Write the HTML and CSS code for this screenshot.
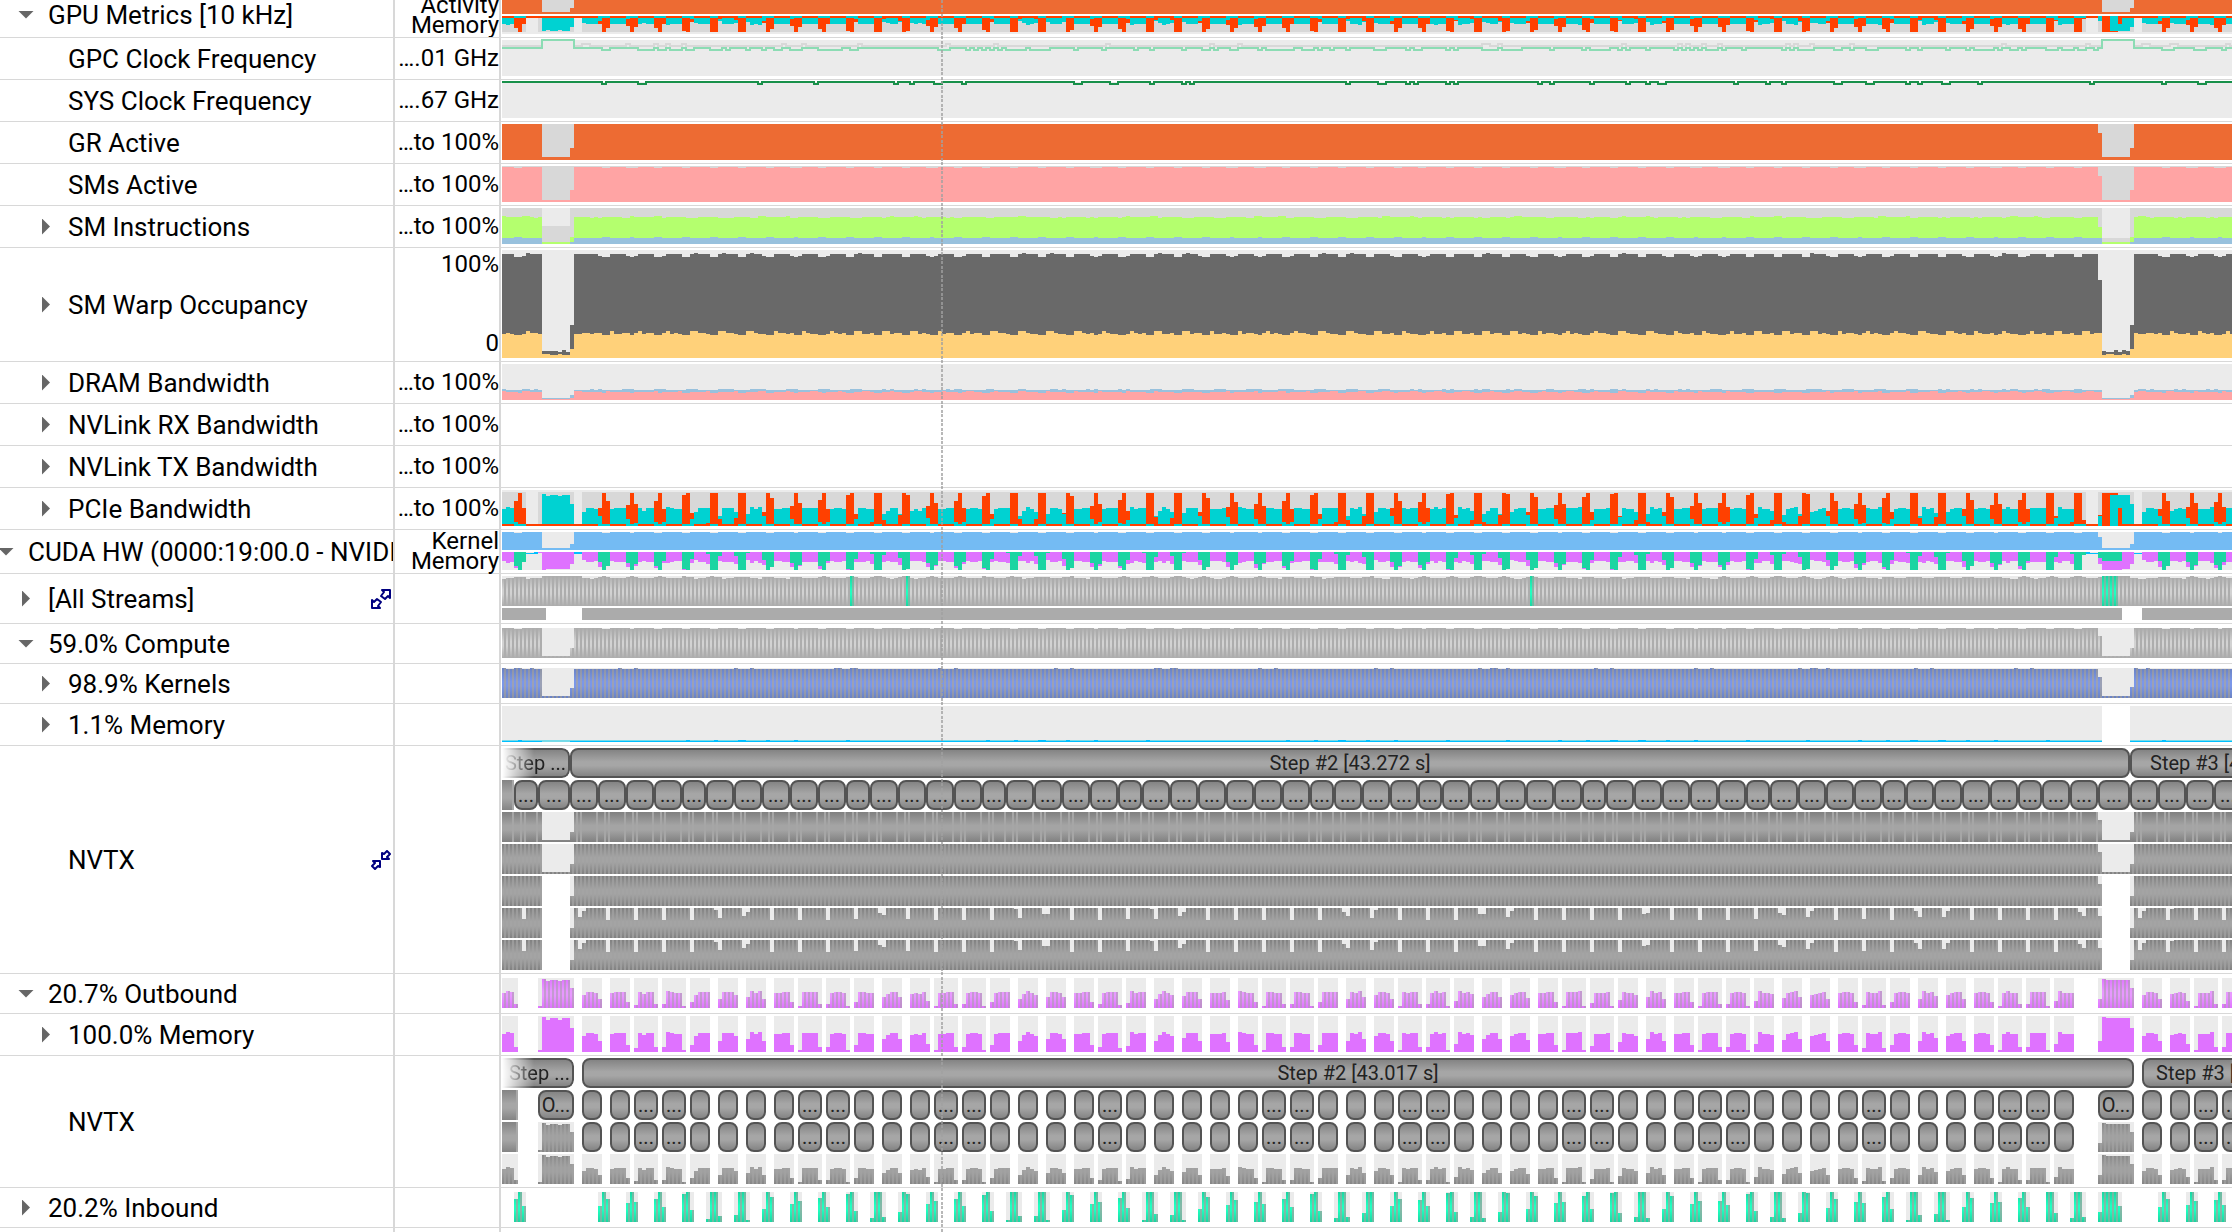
FILE: index.html
```html
<!DOCTYPE html>
<html lang="en">
<head>
<meta charset="utf-8">
<title>GPU timeline</title>
<link rel="stylesheet" href="styles.css">
</head>
<body>
<main class="timeline">
  <section class="row row-first">
    <div class="name lvl1"><button class="exp open" aria-label="Collapse GPU Metrics"></button><span>GPU Metrics [10 kHz]</span></div>
    <div class="scale"><span>Activity</span><span>Memory</span></div>
    <div class="lanes"><div class="lane h14" data-lane="activity"></div><div class="lane h18" data-lane="gpumem"></div></div>
  </section>
  <section class="row"><div class="name leaf"><span>GPC Clock Frequency</span></div><div class="scale"><span>….01 GHz</span></div><div class="lanes"><div class="lane h36" data-lane="gpc"></div></div></section>
  <section class="row"><div class="name leaf"><span>SYS Clock Frequency</span></div><div class="scale"><span>….67 GHz</span></div><div class="lanes"><div class="lane h36" data-lane="sys"></div></div></section>
  <section class="row"><div class="name leaf"><span>GR Active</span></div><div class="scale"><span>…to 100%</span></div><div class="lanes"><div class="lane h36" data-lane="gr"></div></div></section>
  <section class="row"><div class="name leaf"><span>SMs Active</span></div><div class="scale"><span>…to 100%</span></div><div class="lanes"><div class="lane h36" data-lane="sms"></div></div></section>
  <section class="row"><div class="name lvl2"><button class="exp" aria-label="Expand SM Instructions"></button><span>SM Instructions</span></div><div class="scale"><span>…to 100%</span></div><div class="lanes"><div class="lane h36" data-lane="instr"></div></div></section>
  <section class="row"><div class="name lvl2"><button class="exp" aria-label="Expand SM Warp Occupancy"></button><span>SM Warp Occupancy</span></div><div class="scale spread"><span>100%</span><span>0</span></div><div class="lanes"><div class="lane h108" data-lane="warp"></div></div></section>
  <section class="row"><div class="name lvl2"><button class="exp" aria-label="Expand DRAM Bandwidth"></button><span>DRAM Bandwidth</span></div><div class="scale"><span>…to 100%</span></div><div class="lanes"><div class="lane h36" data-lane="dram"></div></div></section>
  <section class="row"><div class="name lvl2"><button class="exp" aria-label="Expand NVLink RX Bandwidth"></button><span>NVLink RX Bandwidth</span></div><div class="scale"><span>…to 100%</span></div><div class="lanes"><div class="lane h36"></div></div></section>
  <section class="row"><div class="name lvl2"><button class="exp" aria-label="Expand NVLink TX Bandwidth"></button><span>NVLink TX Bandwidth</span></div><div class="scale"><span>…to 100%</span></div><div class="lanes"><div class="lane h36"></div></div></section>
  <section class="row"><div class="name lvl2"><button class="exp" aria-label="Expand PCIe Bandwidth"></button><span>PCIe Bandwidth</span></div><div class="scale"><span>…to 100%</span></div><div class="lanes"><div class="lane h36" data-lane="pcie"></div></div></section>
  <section class="row"><div class="name lvl0"><button class="exp open" aria-label="Collapse CUDA HW"></button><span>CUDA HW (0000:19:00.0 - NVIDIA)</span></div><div class="scale"><span>Kernel</span><span>Memory</span></div><div class="lanes"><div class="lane h18" data-lane="kernel"></div><div class="lane h18" data-lane="cudamem"></div></div></section>
  <section class="row"><div class="name lvl1"><button class="exp" aria-label="Expand all streams"></button><span>[All Streams]</span>
    <button class="link" aria-label="Expand rows"><svg width="20" height="20" viewBox="0 0 20 20"><path d="M11 1H19V9L17 7L14 10L10 7L13 3Z"/><path d="M9 19H1V11L3 13L6 10L10 13L7 17Z"/></svg></button></div>
    <div class="scale"></div><div class="lanes"><div class="lane h30" data-lane="streams"></div><div class="lane h12" data-lane="range"></div></div></section>
  <section class="row roomy"><div class="name lvl1"><button class="exp open" aria-label="Collapse Compute"></button><span>59.0% Compute</span></div><div class="scale"></div><div class="lanes"><div class="lane h30" data-lane="compute"></div></div></section>
  <section class="row roomy"><div class="name lvl2"><button class="exp" aria-label="Expand Kernels"></button><span>98.9% Kernels</span></div><div class="scale"></div><div class="lanes"><div class="lane h30" data-lane="kernels"></div></div></section>
  <section class="row"><div class="name lvl2"><button class="exp" aria-label="Expand Memory"></button><span>1.1% Memory</span></div><div class="scale"></div><div class="lanes"><div class="lane h36" data-lane="memory"></div></div></section>
  <section class="row"><div class="name leaf"><span>NVTX</span>
    <button class="link" aria-label="Collapse rows"><svg width="20" height="20" viewBox="0 0 20 20"><path d="M11 3V9H18L16 7L19 4L16 1L13 4Z"/><path d="M9 17V11H2L4 13L1 16L4 19L7 16Z"/></svg></button></div>
    <div class="scale"></div>
    <div class="lanes"><div class="lane h30" data-lane="steps1"></div><div class="lane h30" data-lane="layers"></div><div class="lane h30" data-lane="nv3"></div><div class="lane h30" data-lane="nv4"></div><div class="lane h30" data-lane="nv5"></div><div class="lane h30" data-lane="nv6"></div><div class="lane h30" data-lane="nv7"></div></div></section>
  <section class="row roomy"><div class="name lvl1"><button class="exp open" aria-label="Collapse Outbound"></button><span>20.7% Outbound</span></div><div class="scale"></div><div class="lanes"><div class="lane h30" data-lane="outbound"></div></div></section>
  <section class="row"><div class="name lvl2"><button class="exp" aria-label="Expand Outbound Memory"></button><span>100.0% Memory</span></div><div class="scale"></div><div class="lanes"><div class="lane h36" data-lane="outmem"></div></div></section>
  <section class="row"><div class="name leaf"><span>NVTX</span></div><div class="scale"></div>
    <div class="lanes"><div class="lane h30" data-lane="steps2"></div><div class="lane h30" data-lane="ops1"></div><div class="lane h30" data-lane="ops2"></div><div class="lane h30" data-lane="ops3"></div></div></section>
  <section class="row roomy"><div class="name lvl1"><button class="exp" aria-label="Expand Inbound"></button><span>20.2% Inbound</span></div><div class="scale"></div><div class="lanes"><div class="lane h30" data-lane="inbound"></div></div></section>
  <section class="row rest"><div class="name"></div><div class="scale"></div><div class="lanes"></div></section>
  <svg class="cursor" width="2"><line x1="1" y1="0" x2="1" y2="4000"/></svg>
</main>
<script src="timeline.js"></script>
</body>
</html>
```
FILE: styles.css
```css
* { box-sizing: border-box; }
body {
  margin: 0;
  background: #fff;
  color: #000;
  font-family: Roboto, "Liberation Sans", sans-serif;
  font-size: 26px;
  overflow: hidden;
}
button { border: 0; padding: 0; background: none; font: inherit; }
.timeline {
  position: relative;
  display: flex;
  flex-direction: column;
  min-height: 100vh;
  overflow: hidden;
}
.row {
  display: grid;
  grid-template-columns: 395px 106px minmax(0, 1fr);
  border-bottom: 1px solid #d8d8d8;
}
.name, .scale { border-right: 2px solid #d8d8d8; }
.name {
  display: flex;
  align-items: center;
  min-width: 0;
  overflow: hidden;
  white-space: nowrap;
  line-height: 30px;
}
.name span { flex: 1; min-width: 0; overflow: hidden; }
.lvl0 .exp { margin-left: -4px; }
.lvl1 { padding-left: 16px; }
.lvl2 { padding-left: 36px; }
.leaf { padding-left: 68px; }
.exp {
  flex: none;
  width: 20px;
  height: 20px;
  margin-right: 12px;
  display: grid;
  place-items: center;
}
.exp::before {
  content: "";
  width: 8px;
  height: 16px;
  background: #666;
  clip-path: polygon(0 0, 100% 50%, 0 100%);
}
.exp.open::before {
  width: 16px;
  height: 8px;
  clip-path: polygon(0 0, 100% 0, 50% 100%);
}
.link { flex: none; width: 20px; height: 20px; margin-right: 2px; display: grid; }
.link path { fill: #fff; stroke: #000080; stroke-width: 2; stroke-linejoin: round; }
.scale {
  display: flex;
  flex-direction: column;
  justify-content: center;
  align-items: flex-end;
  min-height: 0;
  padding-bottom: 1px;
  font-size: 24px;
  line-height: 20px;
  white-space: nowrap;
}
.spread { justify-content: space-between; padding: 6px 0 8px; }
.row-first { height: 38px; overflow: hidden; }
.row-first .name { padding-bottom: 8px; }
.row-first .scale { justify-content: flex-end; padding-bottom: 2px; }
.lanes {
  display: flex;
  flex-direction: column;
  gap: 2px;
  min-width: 0;
  padding: 2px 0 3px 1px;
}
.row-first .lanes { padding-top: 0; }
.roomy .lanes { padding-top: 4px; padding-bottom: 5px; }
.rest { flex: 1; border-bottom: 0; }
.rest .lanes { padding: 0; }
.lane { position: relative; overflow-x: clip; overflow-y: visible; }
.lane svg { display: block; overflow: visible; }
.h12 { height: 12px; }
.h14 { height: 14px; }
.h18 { height: 18px; }
.h30 { height: 30px; }
.h36 { height: 36px; }
.h108 { height: 108px; }
.pill {
  position: absolute;
  top: 0;
  height: 30px;
  border: 2px solid #545454;
  border-radius: 8px;
  background: linear-gradient(#848484, #a6a6a6 45%, #a6a6a6 60%, #848484);
  color: #222;
  font-size: 20px;
  line-height: 26px;
  text-align: center;
  white-space: nowrap;
  overflow: hidden;
}
.pill.start {
  border-left: 0;
  border-radius: 0 8px 8px 0;
  padding-right: 2px;
  text-align: right;
  -webkit-mask-image: linear-gradient(to right, transparent, #000 32px);
  mask-image: linear-gradient(to right, transparent, #000 32px);
}
.pill.tail { padding-left: 18px; text-align: left; }
.pill.tail2 { padding-left: 12px; text-align: left; }
.pill.cut { border: 0; border-right: 2px solid #a8a8a8; border-radius: 0; }
.cursor {
  position: absolute;
  left: 941px;
  top: 0;
  height: 100%;
}
.cursor line {
  stroke: #a0a0a0;
  stroke-opacity: .75;
  stroke-width: 2;
  stroke-dasharray: 3 2 3 1;
}
```
FILE: timeline.js
```js
// Every lane is drawn in bins of 4px.
const BIN = 4, N = 434, W = N * BIN;

// Transfers: first bin of each burst, then one base-36 height (of 30) per bin.
const OUT = "0:fhg4 9:2trssrssk 20:dggf9 27:fggg6 33:3gegg4 40:4hgff2 47:6dggg 54:9gggd 61:bhfh9 68:ffgg6 74:2gggg4 81:4fggf2 88:6ggff 95:beggb 102:efeg7 108:2ffgg4 115:4fggf2 122:6fggg 129:9ehfd 136:bggfb 143:ffgg6 149:4fggg3 156:5hfgg 163:9ehfd 170:cggg9 177:fffg8 184:hgff6 190:2ggff4 197:4ggff2 204:6gggg 211:9gfhb 218:dggf9 224:2gfgg4 231:4fhfg2 238:7hfge 245:beggb 252:dfgga 259:ffgg6 265:2gggh2 272:5fffg2 279:8gffd 286:bhfg9 293:ffgg6 299:2fggg4 306:4fggf2 313:7hffe 320:afghb 327:defg9 334:fggf6 340:3gffh3 347:6fggf 354:9hfgc 361:dfgg9 368:fggf6 374:2fhff4 381:4gggg2 388:7hfff 399:9tssssssk 410:dggf9 417:efgf7 423:2fffh4 430:4gggg";
const IN = "3:nug 24:gun 31:juk 38:nuf 45:suc 51:3uu6 58:7uu2 65:dup 72:iul 79:ouf 86:sub 92:4uu5 99:aus 106:iul 113:nug 120:rub 126:2uu6 133:6uu2 140:cur 147:iuk 154:oue 160:2uu8 167:7uu2 174:dup 181:hum 188:kui 195:nuf 202:sub 208:4uu5 215:9uu 222:gun 229:mug 236:tua 242:5uu4 249:aut 256:duq 263:juk 270:qud 277:tu9 283:5uu4 290:duq 297:iul 304:luh 311:sub 317:5uu4 324:9ut 331:eun 338:kuj 345:pud 351:2uu7 358:8uu2 365:fuo 372:juk 379:ouf 386:uu9 392:4uu5 399:auuuug 414:fun 421:hul 428:muh";
function parse(text) {
  const values = new Array(N).fill(0), groups = [];
  text.split(" ").forEach(part => {
    const [at, hs] = part.split(":");
    groups.push([+at, hs.length]);
    [...hs].forEach((c, k) => { if (+at + k < N) values[+at + k] = parseInt(c, 36); });
  });
  return { values, groups };
}
const out = parse(OUT), inn = parse(IN);
const O = out.values, I = inn.values;
const LAYERS = [3,9,17,24,31,38,45,51,58,65,72,79,86,92,99,106,113,120,126,133,140,147,154,160,167,174,181,188,195,202,208,215,222,229,235,242,249,256,263,270,276,283,290,297,304,311,317,324,331,338,345,351,358,365,372,379,385,392,399,407,414,421,428,435];

const idle = i => (i >= 10 && i <= 16) || (i >= 400 && i <= 406);
const noise = (i, m) => ((i * 7919 + (i >> 2) * 104729) % 101) % m;
// level for busy bins, with the two idle windows and their edges
const busy = (h, low) => i => idle(i) ? low : i === 17 || i === 407 ? h / 3 : i === 399 ? h * .74 : h;

let defs = 0;
function lane(name, h, draw) {
  const el = document.querySelector(`[data-lane="${name}"]`);
  let body = "";
  const api = {
    rect(x, y, w, hh, fill) { body += `<rect x="${x}" y="${y}" width="${w}" height="${hh}" fill="${fill}"/>`; },
    // bars(height, fill, base): base(i) gives the bottom edge
    bars(fn, fill, base) {
      let d = "";
      for (let i = 0; i < N; i++) {
        const v = Math.round(fn(i));
        if (v > 0) d += `M${i * BIN} ${(base ? base(i) : h) - v}h4v${v}h-4z`;
      }
      body += `<path d="${d}" fill="${fill}"/>`;
    },
    stripes(edgeA, midA, edgeB, midB) {
      const id = "p" + (++defs);
      const g = (n, a, b) => `<linearGradient id="${id}${n}" x1="0" x2="0" y1="0" y2="1"><stop offset="0" stop-color="${a}"/><stop offset=".45" stop-color="${b}"/><stop offset=".6" stop-color="${b}"/><stop offset="1" stop-color="${a}"/></linearGradient>`;
      body += `<defs>${g("a", edgeA, midA)}${g("b", edgeB, midB)}<pattern id="${id}" width="4" height="${h}" patternUnits="userSpaceOnUse"><rect width="2" height="${h}" fill="url(#${id}a)"/><rect x="2" width="2" height="${h}" fill="url(#${id}b)"/></pattern></defs>`;
      return `url(#${id})`;
    },
    path(d, stroke) { body += `<path d="${d}" fill="none" stroke="${stroke}" stroke-width="2"/>`; }
  };
  draw(api);
  el.innerHTML = `<svg width="${W}" height="${h}" shape-rendering="crispEdges" aria-hidden="true">${body}</svg>`;
}
const LIGHT = "#ebebeb", MID = "#d8d8d8";

lane("activity", 14, c => {
  c.rect(0, 0, W, 14, "#ed6b33");
  c.rect(40, 0, 28, 12, MID); c.rect(68, 0, 4, 8, MID);
  c.rect(1600, 0, 28, 12, MID); c.rect(1628, 0, 4, 8, MID);
});

const quiet = i => (i >= 6 && i <= 8) || (i >= 18 && i <= 19) || (i >= 396 && i <= 398) || (i >= 408 && i <= 409);
function pcie(c, h, k, down) {
  const put = (fn, fill) => c.bars(fn, fill, down ? i => Math.round(fn(i)) : null);
  c.rect(0, 0, W, h, LIGHT);
  put(i => quiet(i) ? 0 : h - 2, MID);
  put(i => I[i] > O[i] ? I[i] * k : 0, "#ff4000");
  put(i => O[i] * k, "#00d2d2");
  put(i => I[i] && I[i] <= O[i] ? Math.max(2, I[i] * k) : 0, "#ff4000");
  put(i => I[i] > O[i] ? Math.max(2, O[i] * k) : 0, "#00d2d2");
  put(i => I[i] ? 0 : 2, "#ff4000");
  put(i => i === 400 || i === 401 ? 29 * k : i === 404 ? 15 * k : 0, "#ff4000");
}
lane("gpumem", 18, c => pcie(c, 18, .53, true));
lane("pcie", 36, c => pcie(c, 36, 1.1, false));

// A clock line sits at `y` and steps to `dy` in the listed bins ("bin" or "bin,width").
function clock(text, y, dy) {
  const level = new Array(N).fill(y);
  text.split(" ").forEach(p => {
    const [b, w] = p.split(",").map(Number);
    for (let k = 0; k < (w || 1); k++) level[b + k] = dy;
  });
  return level;
}
function trace(level) {
  let d = `M0 ${level[0]}`;
  for (let i = 1; i < N; i++) if (level[i] !== level[i - 1]) d += `H${i * 4}V${level[i]}`;
  return d + `H${W}`;
}
lane("gpc", 36, c => {
  c.rect(0, 0, W, 36, LIGHT);
  const up = clock("20,2 31 38 41 45 70 75 89 111 123 151 177 184 245,2 249 280 294 296 300 304 321 323 327 337 375 396 410,2 417,2 431", 6, 4);
  const lo = clock("25,2 34,4 39,2 42,3 46,2 52,3 56 61 65 68,2 72,3 79,6 87,2 109,3 116 118 120 122 124 126,5 132,5 143 150 158 162 170 175,2 178 182,2 189 191,7 200,3 204 207 211 218,3 226 228,2 236 238 245,4 250,5 262 270 272,5 279 281 286 293 295 297 299 301,3 305 310 320 322 324,4 333,2 337 341,3 351 354 361 366 368,5 374 377,2 380 386,3 390,3 394,2 398 415,3 423,3 430", 8, 10);
  for (let i = 0; i < N; i++) if ((i >= 10 && i <= 17) || (i >= 400 && i <= 407)) { lo[i] = 0; up[i] = 0; }
  c.path(trace(up), MID);
  c.path(trace(lo), "#8cdcb4");
});
lane("sys", 36, c => {
  c.rect(0, 0, W, 36, LIGHT);
  const low = clock("25 34,2 64 78 98 102 108,2 115 143,2 152,2 162 170 172 211 219,2 226 228 236 238 259 262 272 281 286 289,2 308 316 320 333,2 341,2 351 354 360,2 369 397 415 424,2", 0, 2);
  c.path(trace(low), "#18904a");
});
lane("gr", 36, c => {
  c.rect(0, 0, W, 36, MID);
  c.bars(busy(36, 3), "#ed6b33");
});
lane("sms", 36, c => {
  c.rect(0, 0, W, 36, MID);
  c.bars(i => busy(35, 2)(i) - (I[i] > 16 && !idle(i) ? 1 : 0), "#ffa4a4");
});
lane("instr", 36, c => {
  c.rect(0, 0, W, 36, MID);
  c.rect(40, 0, 28, 18, LIGHT); c.rect(1600, 0, 28, 30, LIGHT);
  c.bars(i => idle(i) ? 2 : i === 17 || i === 407 ? 7 : i === 399 ? 17 : 26 + (noise(i, 12) === 0 ? 2 : noise(i, 3) ? 1 : 0), "#b4ff6e");
  c.bars(i => idle(i) ? 0 : i === 17 || i === 407 ? 2 : I[i] > 22 ? 7 : 6, "#98c1dd");
});
lane("warp", 108, c => {
  c.rect(0, 0, W, 108, LIGHT);
  c.bars(i => idle(i) ? 6 + noise(i, 3) : i === 17 || i === 407 ? 33 : i === 399 ? 78 : I[i] > 22 ? 101 : I[i] > 12 ? 102 : I[i - 1] && !I[i] && noise(i, 3) === 0 ? 105 : 104, "#696969");
  c.bars(i => idle(i) ? 3 + noise(i, 2) : i === 17 || i === 407 ? 9 : I[i - 2] > 26 ? 27 : I[i] > 20 ? 23 : 24 + noise(i, 2), "#ffd17a");
});
lane("dram", 36, c => {
  c.rect(0, 0, W, 36, LIGHT);
  c.bars(i => idle(i) ? 2 : i === 17 || i === 407 ? 5 : 10 + (noise(i, 3) === 0 ? 1 : 0), "#98c1dd");
  c.bars(i => idle(i) ? 1 : i === 17 || i === 407 ? 2 : I[i] > 24 ? 7 : 8 + (noise(i, 4) === 0 ? 1 : 0), "#ffa4a4");
});
lane("kernel", 18, c => {
  c.rect(0, 0, W, 18, LIGHT);
  c.bars(i => busy(18, 2)(i) - (I[i] > 22 && !idle(i) ? 1 : 0), "#74bbf3");
});
lane("cudamem", 18, c => {
  c.rect(0, 0, W, 18, LIGHT);
  c.bars(i => quiet(i) ? (i < 8 || i > 396) ? 1 : 2 : 0, "#00bfff", () => 2);
  const sum = i => Math.min(18, Math.round(I[i] * .6 + O[i] * .62));
  c.bars(sum, "#df72ff", sum);
  c.bars(i => Math.min(i >= 399 && i < 405 ? 9 : 18, I[i] * .6), "#1bd5a2", i => Math.min(i >= 399 && i < 405 ? 9 : 18, Math.round(I[i] * .6)));
});

lane("streams", 30, c => {
  c.rect(0, 0, W, 30, LIGHT);
  const g = c.stripes("#adadad", "#d2d2d2", "#adadad", "#adadad");
  const h = i => idle(i) || (i > 16 && i < 20) ? 30 : I[i] > 26 ? 30 - noise(i, 2) : I[i] ? 29 : noise(i, 6) === 0 ? 27 : 28;
  c.bars(h, g);
  const hot = [87, 101, 117 + 140];
  c.bars(i => hot.includes(i) || (i >= 400 && i <= 403) ? 30 : 0, c.stripes("#1bd5a2", "#20ffc0", "#68bda2", "#84b8a8"));
});
lane("range", 12, c => {
  c.rect(0, 0, 44, 12, "#ababab");
  c.rect(80, 0, 1540, 12, "#ababab");
  c.rect(1640, 0, W - 1640, 12, "#ababab");
});
lane("compute", 30, c => {
  c.rect(0, 0, W, 30, LIGHT);
  c.bars(i => busy(30, 2)(i) - (I[i] > 22 && !idle(i) ? 1 : 0), c.stripes("#adadad", "#d2d2d2", "#adadad", "#adadad"));
});
lane("kernels", 30, c => {
  c.rect(0, 0, W, 30, LIGHT);
  c.bars(i => busy(29, 2)(i) + (noise(i, 11) === 0 && !idle(i) ? 1 : 0), c.stripes("#6a82c2", "#7b97e8", "#8c93a6", "#9ba1b6"));
});
lane("memory", 36, c => {
  c.rect(0, 0, 1600, 36, LIGHT); c.rect(1628, 0, W, 36, LIGHT);
  c.rect(0, 34, 1600, 1, "#77dbe8"); c.rect(0, 35, 1600, 1, "#00bfff");
  c.rect(1628, 34, W, 1, "#77dbe8"); c.rect(1628, 35, W, 1, "#00bfff");
  c.rect(40, 35, 28, 1, "#77dbe8");
  c.bars(i => !idle(i) && I[i] > 27 && noise(i, 2) ? 2 : 0, "#00bfff");
});

const GRAY = ["#808080", "#a4a4a4", "#9a9a9a", "#a2a2a2"];
lane("nv3", 30, c => {
  c.rect(0, 0, W, 30, LIGHT);
  c.bars(busy(30, 2), c.stripes("#808080", "#a4a4a4", "#808080", "#a4a4a4"));
  LAYERS.forEach(s => [-2, 6, 10].forEach(o => {
    const x = s * 4 + o;
    if (!idle(x >> 2) && x >> 2 !== 17 && x >> 2 !== 407 && x >> 2 !== 399) c.rect(x, 0, 2, 30, "#a6a6a6");
  }));
});
lane("nv4", 30, c => { c.rect(0, 0, W, 30, LIGHT); c.bars(busy(30, 2), c.stripes(...GRAY)); });
lane("nv5", 30, c => {
  c.rect(0, 0, 40, 30, LIGHT); c.rect(68, 0, 1532, 30, LIGHT); c.rect(1628, 0, W, 30, LIGHT);
  c.bars(busy(30, 0), c.stripes(...GRAY));
});
// "bin:notch" pairs, one digit of depth per bin
const NOTCH = {};
"5:b 19:93 26:c 33:c 40:c 47:c 53:2a 60:84 67:c 74:c 81:c 88:b 94:57 101:b 108:c 115:c 122:c 128:1a 135:66 142:c 149:c 156:b 162:1b 169:84 176:c 183:c 190:c 197:c 204:c 210:48 217:a2 224:c 231:c 238:c 244:66 251:93 258:c 265:c 272:c 279:c 285:65 292:c 299:c 306:c 313:b 319:57 326:93 333:c 340:b 347:c 353:39 360:93 367:c 374:c 381:c 388:c 394:48 409:a3 416:c1 423:c 430:c".split(" ").forEach(p => {
  const [at, hs] = p.split(":");
  [...hs].forEach((ch, k) => { NOTCH[+at + k] = parseInt(ch, 36); });
});
["nv6", "nv7"].forEach(n => lane(n, 30, c => {
  c.rect(0, 0, 40, 30, LIGHT); c.rect(68, 0, 1532, 30, LIGHT); c.rect(1628, 0, W, 30, LIGHT);
  c.bars(i => busy(30, 0)(i) - (NOTCH[i] || 0), c.stripes(...GRAY));
}));

function groupsBack(c, groups, h, keep) {
  groups.forEach(([s, n]) => { if (!keep || keep(n)) c.rect(s * 4, 0, n * 4, h, LIGHT); });
}
lane("outbound", 30, c => {
  groupsBack(c, out.groups, 30);
  c.bars(i => O[i], c.stripes("#df72ff", "#e898ff", "#c08ccd", "#c49ad0"));
});
lane("outmem", 36, c => { groupsBack(c, out.groups, 36); c.bars(i => O[i] * 1.2, "#df72ff"); });
lane("ops3", 30, c => { groupsBack(c, out.groups, 30); c.bars(i => O[i], c.stripes("#868686", "#a0a0a0", "#9a9a9a", "#a2a2a2")); });
lane("ops2", 30, c => {
  groupsBack(c, out.groups, 30, n => n === 9);
  c.bars(i => (i > 8 && i < 18) || (i > 398 && i < 408) ? O[i] : 0, c.stripes("#868686", "#a0a0a0", "#9a9a9a", "#a2a2a2"));
});
lane("inbound", 30, c => {
  groupsBack(c, inn.groups, 30);
  c.bars(i => I[i], c.stripes("#1bd5a2", "#20ffc0", "#68bda2", "#84b8a8"));
});

function pill(name, x0, x1, text, cls) {
  const el = document.createElement("div");
  el.className = "pill " + (cls || "");
  el.style.left = x0 + "px";
  el.style.width = (x1 - x0) + "px";
  el.textContent = text || "";
  document.querySelector(`[data-lane="${name}"]`).append(el);
}
pill("steps1", 0, 68, "Step ...", "start");
pill("steps1", 68, 1628, "Step #2 [43.272 s]");
pill("steps1", 1628, 1900, "Step #3 [43.301 s]", "tail");
pill("steps2", 0, 72, "Step ...", "start");
pill("steps2", 80, 1632, "Step #2 [43.017 s]");
pill("steps2", 1640, 1900, "Step #3 [43.044 s]", "tail2");
pill("layers", 0, 12, "", "cut");
for (let k = 0; k + 1 < LAYERS.length; k++) pill("layers", LAYERS[k] * 4, LAYERS[k + 1] * 4, "...");
["ops1", "ops2"].forEach(n => {
  pill(n, 0, 16, "", "cut");
  out.groups.slice(1).forEach(([s, len]) => {
    if (s === 430) len = 6;
    if (len === 9) { if (n === "ops1") pill(n, s * 4, (s + len) * 4, "O..."); }
    else pill(n, s * 4, (s + len) * 4, len === 6 ? "..." : "");
  });
});
```
